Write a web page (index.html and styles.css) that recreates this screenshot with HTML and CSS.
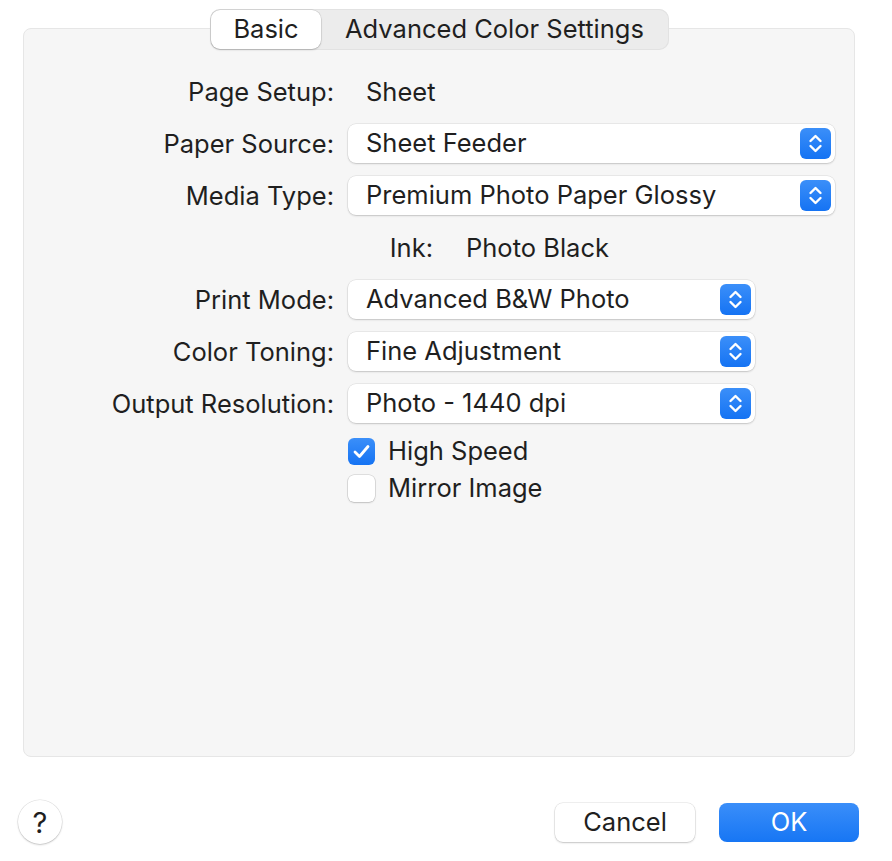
FILE: index.html
```html
<!DOCTYPE html>
<html>
<head>
<meta charset="utf-8">
<link rel="stylesheet" href="styles.css">
</head>
<body>
<div class="dialog">
  <div class="tabs">
    <div class="tab active">Basic</div>
    <div class="tab">Advanced Color Settings</div>
  </div>
  <div class="box">
    <div class="form">
      <div class="label">Page Setup:</div>
      <div class="value">Sheet</div>

      <div class="label">Paper Source:</div>
      <div class="popup wide"><span>Sheet Feeder</span><svg class="stepper" width="31" height="31" viewBox="0 0 31 31"><rect width="31" height="31" rx="6" fill="url(#g1)"/><path d="M10.5 13 L15.5 8 L20.5 13 M10.5 18 L15.5 23 L20.5 18" fill="none" stroke="#fff" stroke-width="2.4" stroke-linecap="round" stroke-linejoin="round"/><defs><linearGradient id="g1" x1="0" y1="0" x2="0" y2="1"><stop offset="0" stop-color="#3b8ff9"/><stop offset="1" stop-color="#1573f3"/></linearGradient></defs></svg></div>

      <div class="label">Media Type:</div>
      <div class="popup wide"><span>Premium Photo Paper Glossy</span><svg class="stepper" width="31" height="31" viewBox="0 0 31 31"><rect width="31" height="31" rx="6" fill="url(#g1)"/><path d="M10.5 13 L15.5 8 L20.5 13 M10.5 18 L15.5 23 L20.5 18" fill="none" stroke="#fff" stroke-width="2.4" stroke-linecap="round" stroke-linejoin="round"/></svg></div>

      <div class="ink"><span class="ink-label">Ink:</span><span class="ink-value">Photo Black</span></div>

      <div class="label">Print Mode:</div>
      <div class="popup"><span>Advanced B&amp;W Photo</span><svg class="stepper" width="31" height="31" viewBox="0 0 31 31"><rect width="31" height="31" rx="6" fill="url(#g1)"/><path d="M10.5 13 L15.5 8 L20.5 13 M10.5 18 L15.5 23 L20.5 18" fill="none" stroke="#fff" stroke-width="2.4" stroke-linecap="round" stroke-linejoin="round"/></svg></div>

      <div class="label">Color Toning:</div>
      <div class="popup"><span>Fine Adjustment</span><svg class="stepper" width="31" height="31" viewBox="0 0 31 31"><rect width="31" height="31" rx="6" fill="url(#g1)"/><path d="M10.5 13 L15.5 8 L20.5 13 M10.5 18 L15.5 23 L20.5 18" fill="none" stroke="#fff" stroke-width="2.4" stroke-linecap="round" stroke-linejoin="round"/></svg></div>

      <div class="label">Output Resolution:</div>
      <div class="popup"><span>Photo - 1440 dpi</span><svg class="stepper" width="31" height="31" viewBox="0 0 31 31"><rect width="31" height="31" rx="6" fill="url(#g1)"/><path d="M10.5 13 L15.5 8 L20.5 13 M10.5 18 L15.5 23 L20.5 18" fill="none" stroke="#fff" stroke-width="2.4" stroke-linecap="round" stroke-linejoin="round"/></svg></div>

      <div class="checks">
        <div class="check"><svg class="cb on" width="27" height="27" viewBox="0 0 27 27"><rect width="27" height="27" rx="6" fill="url(#g1)"/><path d="M7 14 L11.5 18.5 L20 8.5" fill="none" stroke="#fff" stroke-width="2.8" stroke-linecap="round" stroke-linejoin="round"/></svg><span>High Speed</span></div>
        <div class="check"><span class="cb off"></span><span>Mirror Image</span></div>
      </div>
    </div>
  </div>
  <div class="footer">
    <div class="help">?</div>
    <div class="buttons">
      <div class="btn cancel">Cancel</div>
      <div class="btn ok">OK</div>
    </div>
  </div>
</div>
</body>
</html>
```

FILE: styles.css
```css
html, body {
  margin: 0;
  padding: 0;
  background: #ffffff;
}
body {
  font-family: "Inter", "Liberation Sans", sans-serif;
  font-size: 25.5px;
  color: #1f1f1f;
}
.dialog {
  height: 861px;
  box-sizing: border-box;
  padding: 9px 37px 17px 23px;
  display: flex;
  flex-direction: column;
}
.tabs {
  align-self: center;
  margin-left: 1px;
  position: relative;
  z-index: 2;
  display: flex;
  height: 41px;
  box-sizing: border-box;
  padding: 1px;
  background: #ececec;
  border-radius: 10px;
  box-shadow: inset 0 0 0 1px #e2e2e2;
}
.tab {
  display: flex;
  align-items: center;
  justify-content: center;
  height: 39px;
  box-sizing: border-box;
  padding-bottom: 2px;
  border-radius: 9px;
  color: #1f1f1f;
}
.tab.active {
  width: 110px;
  background: #fff;
  box-shadow: 0 0 0 0.5px rgba(0,0,0,0.12), 0 1px 2px rgba(0,0,0,0.18);
}
.tab:not(.active) {
  width: 347px;
}
.box {
  flex: 1;
  margin-top: -22px;
  background: #f6f6f6;
  border: 1px solid #e6e6e6;
  border-radius: 8px;
}
.form {
  display: grid;
  grid-template-columns: 310px 1fr;
  column-gap: 14px;
  row-gap: 12px;
  padding: 43px 19px 0 0;
  grid-auto-rows: 40px;
}
.label {
  display: flex;
  align-items: center;
  justify-content: flex-end;
  padding-bottom: 2px;
}
.value {
  display: flex;
  align-items: center;
  padding-left: 18px;
  padding-bottom: 2px;
}
.popup {
  display: flex;
  align-items: center;
  justify-content: space-between;
  width: 407px;
  height: 39px;
  box-sizing: border-box;
  padding: 0 4px 0 18px;
  background: #fff;
  border-radius: 8px;
  box-shadow: 0 0 0 0.5px rgba(0,0,0,0.1), 0 1px 2px rgba(0,0,0,0.16);
}
.popup span {
  margin-top: -2px;
}
.popup.wide {
  width: auto;
}
.ink {
  grid-column: 1 / 3;
  display: flex;
  align-items: center;
  padding-bottom: 2px;
}
.ink-label {
  width: 409px;
  text-align: right;
}
.ink-value {
  margin-left: 33px;
}
.checks {
  grid-column: 2;
  grid-row: span 2;
  display: flex;
  flex-direction: column;
  gap: 10px;
  margin-top: 2px;
}
.check {
  display: flex;
  align-items: center;
  gap: 13px;
  height: 27px;
}
.check span:last-child {
  margin-top: -2px;
}
.cb {
  display: block;
  width: 27px;
  height: 27px;
  flex: none;
}
.cb.off {
  box-sizing: border-box;
  background: #fff;
  border-radius: 6px;
  box-shadow: 0 0 0 0.5px rgba(0,0,0,0.18), 0 1px 2px rgba(0,0,0,0.14);
}
.footer {
  display: flex;
  align-items: center;
  justify-content: space-between;
  height: 44px;
  margin-top: 43px;
  margin-left: -5px;
  margin-right: -4px;
}
.help {
  width: 44px;
  height: 44px;
  border-radius: 50%;
  background: #fff;
  display: flex;
  align-items: center;
  justify-content: center;
  font-size: 29px;
  color: #1f1f1f;
  box-shadow: 0 0 0 0.5px rgba(0,0,0,0.12), 0 1px 2px rgba(0,0,0,0.18);
}
.buttons {
  display: flex;
  gap: 24px;
}
.btn {
  width: 140px;
  height: 39px;
  box-sizing: border-box;
  padding-bottom: 2px;
  border-radius: 8px;
  display: flex;
  align-items: center;
  justify-content: center;
}
.cancel {
  background: #fff;
  color: #1f1f1f;
  box-shadow: 0 0 0 0.5px rgba(0,0,0,0.12), 0 1px 2px rgba(0,0,0,0.18);
}
.ok {
  background: linear-gradient(#3a8ef9, #1776f4);
  color: #fff;
}
```
